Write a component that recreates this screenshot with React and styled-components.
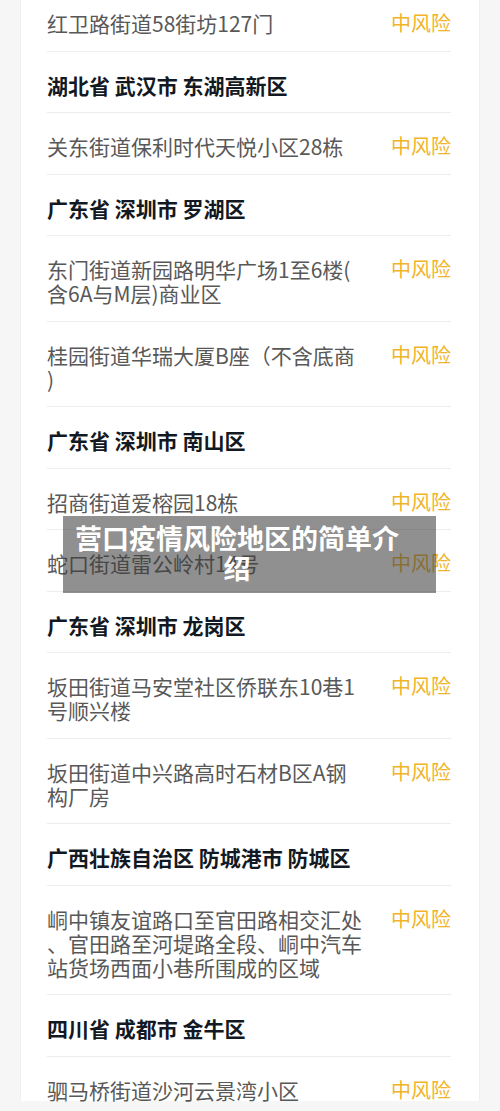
import React from 'react'
import styled, {createGlobalStyle} from 'styled-components'

const GlobalStyle = createGlobalStyle`
    html, body {
        margin: 0;
        padding: 0;
        background: #f6f6f6;
        font-family: "Noto Sans CJK SC", "Noto Sans", sans-serif;
    }
    #root {
        min-height: 1111px;
        overflow: hidden;
    }
`

const items = [
    {type: 'row', lines: ['红卫路街道58街坊127门']},
    {type: 'head', text: '湖北省 武汉市 东湖高新区'},
    {type: 'row', lines: ['关东街道保利时代天悦小区28栋']},
    {type: 'head', text: '广东省 深圳市 罗湖区'},
    {type: 'row', lines: ['东门街道新园路明华广场1至6楼(', '含6A与M层)商业区']},
    {type: 'row', lines: ['桂园街道华瑞大厦B座（不含底商', ')']},
    {type: 'head', text: '广东省 深圳市 南山区'},
    {type: 'row', lines: ['招商街道爱榕园18栋']},
    {type: 'row', lines: ['蛇口街道雷公岭村14号']},
    {type: 'head', text: '广东省 深圳市 龙岗区'},
    {type: 'row', lines: ['坂田街道马安堂社区侨联东10巷1', '号顺兴楼']},
    {type: 'row', lines: ['坂田街道中兴路高时石材B区A钢', '构厂房']},
    {type: 'head', text: '广西壮族自治区 防城港市 防城区'},
    {type: 'row', lines: ['峒中镇友谊路口至官田路相交汇处', '、官田路至河堤路全段、峒中汽车', '站货场西面小巷所围成的区域']},
    {type: 'head', text: '四川省 成都市 金牛区'},
    {type: 'row', lines: ['驷马桥街道沙河云景湾小区']},
]

function App() {
    return (
        <Page>
            <GlobalStyle />
            <Card>
                <List>
                    {items.map((item, i) =>
                        item.type === 'head' ? (
                            <Item key={i}>
                                <Region>{item.text}</Region>
                            </Item>
                        ) : (
                            <Item key={i}>
                                <Address>
                                    {item.lines.map((l, j) => (
                                        <span key={j}>{l}</span>
                                    ))}
                                </Address>
                                <Risk>中风险</Risk>
                            </Item>
                        )
                    )}
                </List>
            </Card>
            <Banner>营口疫情风险地区的简单介绍</Banner>
        </Page>
    )
}

export default App

const Page = styled.div`
    position: relative;
    width: 500px;
    height: 1111px;
    overflow: hidden;
`

const Card = styled.div`
    margin: 0 20px;
    padding: 0 28px 0 26px;
    background: #ffffff;
    border-left: 1px solid #f0f0f0;
    border-right: 1px solid #f0f0f0;
    height: 1111px;
    box-sizing: border-box;
`

const List = styled.div`
    margin-top: -10px;
`

const Item = styled.div`
    display: flex;
    justify-content: space-between;
    align-items: flex-start;
    padding: 21px 0 15.5px;
    border-bottom: 1px solid #ededed;
`

const Region = styled.div`
    font-size: 21px;
    line-height: 24px;
    font-weight: 700;
    color: #131922;
`

const Address = styled.div`
    width: 330px;
    font-size: 21px;
    line-height: 24px;
    color: #585858;
    span {
        display: block;
        white-space: nowrap;
    }
`

const Risk = styled.div`
    font-size: 20px;
    line-height: 24px;
    color: #f0b429;
    white-space: nowrap;
`

const Banner = styled.div`
    position: absolute;
    left: 63px;
    top: 516px;
    width: 373px;
    height: 77px;
    box-sizing: border-box;
    padding: 7px 34px 10px 9px;
    background: rgba(60, 60, 60, 0.57);
    color: #ffffff;
    font-size: 27px;
    line-height: 30px;
    font-weight: 700;
    text-align: center;
`
